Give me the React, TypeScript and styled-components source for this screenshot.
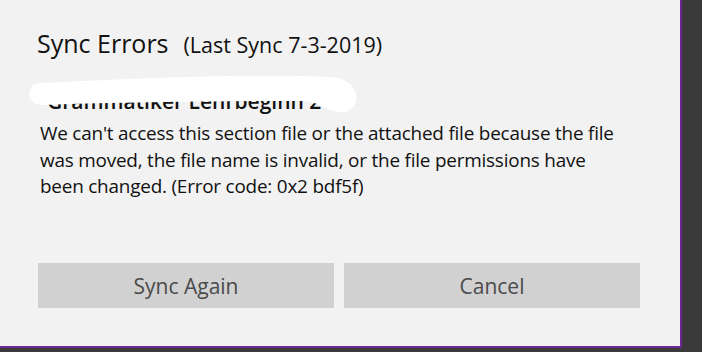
import React from "react";
import styled, { createGlobalStyle } from "styled-components";

const Global = createGlobalStyle`
  html, body { margin: 0; padding: 0; background: #3a3a3a; }
  body { font-family: "Open Sans", "Noto Sans", sans-serif; }
`;

const Dialog = styled.div`
  box-sizing: content-box;
  width: 680px;
  height: 346px;
  background: #f2f2f2;
  border-right: 2px solid #6c2799;
  border-bottom: 2px solid #6c2799;
  display: flex;
  flex-direction: column;
`;

const Header = styled.div`
  display: flex;
  align-items: baseline;
  gap: 15px;
  padding: 26px 0 0 37px;
  height: 40px;
`;

const Title = styled.h1`
  margin: 0;
  font-size: 25px;
  font-weight: 400;
  color: #111;
  line-height: 34px;
`;

const Subtitle = styled.span`
  font-size: 21.5px;
  color: #111;
`;

const FileRow = styled.div`
  position: relative;
  margin-top: 4px;
  height: 45px;
  box-sizing: border-box;
  padding: 21px 0 0 47px;
`;

const FileName = styled.div`
  font-size: 21px;
  font-weight: 600;
  color: #111;
  line-height: 20px;
  white-space: nowrap;
`;

const Redaction = styled.svg`
  position: absolute;
  left: 0;
  top: 0;
`;

const Message = styled.p`
  margin: 5px 0 0 40px;
  width: 582px;
  font-size: 18.9px;
  letter-spacing: -0.2px;
  line-height: 26.5px;
  color: #111;
`;

const Buttons = styled.div`
  display: flex;
  gap: 10px;
  margin: auto 0 38px 38px;
`;

const Button = styled.button`
  width: 296px;
  height: 45px;
  border: none;
  background: #d1d1d1;
  color: #4a4a4a;
  font-family: inherit;
  font-size: 21px;
  padding: 0;
`;

export default function App() {
  return (
    <>
      <Global />
      <Dialog>
        <Header>
          <Title>Sync Errors</Title>
          <Subtitle>(Last Sync 7-3-2019)</Subtitle>
        </Header>
        <FileRow>
          <FileName>Grammatiker Lehrbeginn 2</FileName>
          <Redaction width="400" height="45" viewBox="0 0 400 45">
            <path
              d="M 42 13 C 120 9, 250 3, 332 7 C 360 9, 364 38, 344 42 C 326 43, 322 31, 300 31 C 220 31, 130 32, 42 35 C 25 35, 25 13, 42 13 Z"
              fill="#ffffff"
            />
          </Redaction>
        </FileRow>
        <Message>
          We can't access this section file or the attached file because the
          file was moved, the file name is invalid, or the file permissions
          have been changed. (Error code: 0x2 bdf5f)
        </Message>
        <Buttons>
          <Button>Sync Again</Button>
          <Button>Cancel</Button>
        </Buttons>
      </Dialog>
    </>
  );
}
